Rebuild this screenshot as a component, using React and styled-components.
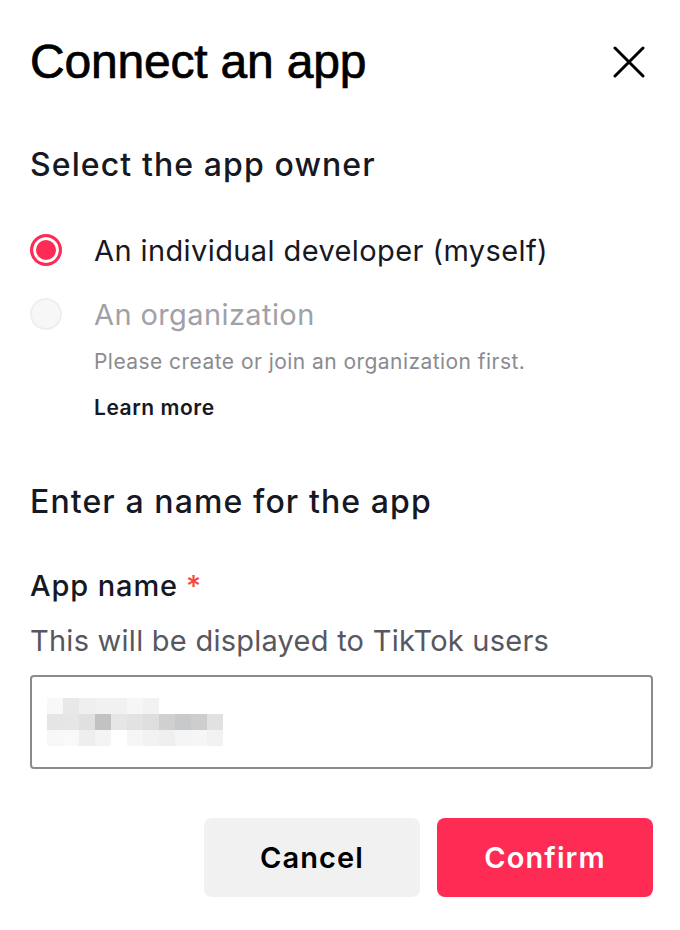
import React from "react";
import styled, { createGlobalStyle } from "styled-components";

const GlobalStyle = createGlobalStyle`
  body {
    margin: 0;
    background: #ffffff;
    font-family: "Inter", "Liberation Sans", sans-serif;
    color: #161823;
  }
`;

const Modal = styled.div`
  width: 680px;
  box-sizing: border-box;
  padding: 34px 27px 32px 30px;
`;

const Header = styled.div`
  display: flex;
  align-items: center;
  justify-content: space-between;
  height: 56px;
`;

const Title = styled.h1`
  margin: 0;
  font-family: "Liberation Sans", Arial, sans-serif;
  font-size: 48px;
  font-weight: 400;
  line-height: 56px;
  letter-spacing: -0.2px;
  color: #000000;
  -webkit-text-stroke: 0.7px #000;
`;

const CloseButton = styled.button`
  display: flex;
  align-items: center;
  justify-content: center;
  width: 40px;
  height: 40px;
  margin-right: 4px;
  padding: 0;
  border: none;
  background: none;
  cursor: pointer;
`;

const SectionTitle = styled.h2`
  margin: ${(p) => p.$top}px 0 0 0;
  font-size: 32px;
  font-weight: 500;
  line-height: 36px;
  letter-spacing: 1.1px;
  color: #161823;
`;

const Option = styled.label`
  display: flex;
  align-items: center;
  height: 36px;
  margin-top: ${(p) => p.$top}px;
  font-size: 29px;
  letter-spacing: 0.4px;
  color: ${(p) => (p.$disabled ? "#a0a1a7" : "#161823")};
`;

const Radio = styled.span`
  box-sizing: border-box;
  width: 32px;
  height: 32px;
  margin-right: 32px;
  border-radius: 50%;
  flex-shrink: 0;
  ${(p) =>
    p.$checked
      ? `border: 3px solid #fe2c55; box-shadow: inset 0 0 0 3px #fff; background: #fe2c55;`
      : `border: 2px solid #eeeeef; background: #f7f7f8;`}
`;

const Hint = styled.p`
  margin: 16px 0 0 64px;
  font-size: 21px;
  line-height: 28px;
  letter-spacing: 0.45px;
  color: #8a8b91;
`;

const LearnMore = styled.a`
  display: block;
  margin: 18px 0 0 64px;
  font-size: 21px;
  font-weight: 600;
  line-height: 28px;
  letter-spacing: 0.55px;
  color: #161823;
  text-decoration: none;
`;

const FieldLabel = styled.div`
  margin-top: 48px;
  font-size: 29px;
  font-weight: 500;
  line-height: 36px;
  letter-spacing: 0.9px;
  color: #161823;
`;

const Required = styled.span`
  margin-left: 8px;
  color: #f5493d;
`;

const FieldDesc = styled.div`
  margin-top: 19px;
  font-size: 29px;
  line-height: 36px;
  letter-spacing: 0.25px;
  color: #57585f;
`;

const InputBox = styled.div`
  display: flex;
  align-items: center;
  box-sizing: border-box;
  height: 94px;
  margin-top: 16px;
  padding-left: 15px;
  border: 2px solid #8a8b91;
  border-radius: 4px;
`;

const Actions = styled.div`
  display: flex;
  justify-content: flex-end;
  gap: 17px;
  margin-top: 49px;
`;

const Button = styled.button`
  width: 216px;
  height: 79px;
  border: none;
  border-radius: 8px;
  font-family: "Inter", "Liberation Sans", sans-serif;
  font-size: 29px;
  font-weight: 600;
  letter-spacing: 1.1px;
  cursor: pointer;
  background: ${(p) => (p.$primary ? "#fe2c55" : "#f1f1f2")};
  color: ${(p) => (p.$primary ? "#ffffff" : "#000000")};
`;

// pixelated (censored) value in the input
const mosaic = [
  ["#f8f8f8", "#e8e8e8", "#efefef", "#f1f1f1", "#f1f1f1", "#f6f6f6", "#f2f2f2"],
  ["#e5e5e5", "#e6e6e6", "#e0e0e0", "#c2c2c2", "#e6e6e6", "#e2e2e2", "#dedede", "#d0d0d0", "#c8c9ca", "#cdcdcd", "#e1e1e1"],
  ["#f8f8f8", "#f9f9f9", "#eeeeee", "#f4f4f4", "#ffffff", "#f6f6f6", "#f2f2f2", "#efefef", "#f4f5f4", "#f6f6f6", "#f2f2f2"],
];

function BlurredValue() {
  return (
    <svg width="176" height="48" viewBox="0 0 176 48">
      {mosaic.map((row, r) =>
        row.map((c, i) => (
          <rect key={r + "-" + i} x={i * 16} y={r * 16} width="16" height="16" fill={c} />
        ))
      )}
    </svg>
  );
}

export default function App() {
  return (
    <>
      <GlobalStyle />
      <Modal>
        <Header>
          <Title>Connect an app</Title>
          <CloseButton aria-label="Close">
            <svg width="32" height="32" viewBox="0 0 32 32">
              <path d="M2 2 L30 30 M30 2 L2 30" stroke="#000" strokeWidth="3" strokeLinecap="round" />
            </svg>
          </CloseButton>
        </Header>

        <SectionTitle $top={57}>Select the app owner</SectionTitle>
        <Option $top={49}>
          <Radio $checked />
          An individual developer (myself)
        </Option>
        <Option $top={28} $disabled>
          <Radio />
          An organization
        </Option>
        <Hint>Please create or join an organization first.</Hint>
        <LearnMore href="#">Learn more</LearnMore>

        <SectionTitle $top={62}>Enter a name for the app</SectionTitle>
        <FieldLabel>
          App name<Required>*</Required>
        </FieldLabel>
        <FieldDesc>This will be displayed to TikTok users</FieldDesc>
        <InputBox>
          <BlurredValue />
        </InputBox>

        <Actions>
          <Button>Cancel</Button>
          <Button $primary>Confirm</Button>
        </Actions>
      </Modal>
    </>
  );
}
